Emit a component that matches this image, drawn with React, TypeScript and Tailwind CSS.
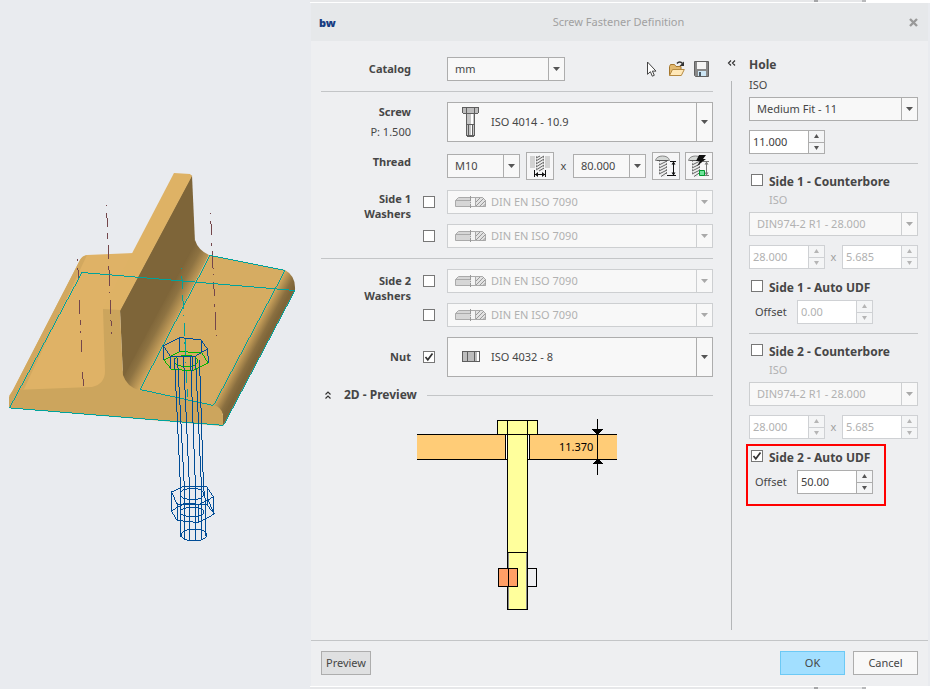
import { useState, type ReactNode } from 'react'
import clsx from 'clsx'

interface DropdownProps {
  label: string
  id?: string
  options: string[]
  disabled?: boolean
  icon?: ReactNode
  className?: string
  selectClass?: string
}

function Dropdown({ label, id, options, disabled, icon, className = 'h-6', selectClass = 'pl-[7px]' }: DropdownProps) {
  return (
    <div
      className={clsx(
        'grid grid-cols-[1fr_16px] border bg-[#f8f8f8]',
        disabled ? 'border-[#cdcfd1] text-[#b1b1b1]' : 'border-[#adadad] text-[#464646]',
        className
      )}
    >
      <select
        id={id}
        aria-label={label}
        disabled={disabled}
        className={clsx('col-span-2 col-start-1 row-start-1 h-full w-full appearance-none outline-none', selectClass)}
      >
        {options.map((option) => (
          <option key={option}>{option}</option>
        ))}
      </select>
      {icon && <span className="pointer-events-none col-start-1 row-start-1 flex items-center pl-[7px]">{icon}</span>}
      <span
        className={clsx(
          'pointer-events-none col-start-2 row-start-1 flex items-center justify-center border-l',
          disabled ? 'border-[#cdcfd1]' : 'border-[#adadad]'
        )}
      >
        <svg width="7" height="4" viewBox="0 0 7 4" aria-hidden="true">
          <path d="M0 0h7L3.500 4z" fill={disabled ? '#a9a9a9' : '#555'} />
        </svg>
      </span>
    </div>
  )
}

interface SpinnerProps {
  label: string
  id?: string
  initial: string
  digits: number
  disabled?: boolean
}

function Spinner({ label, id, initial, digits, disabled }: SpinnerProps) {
  const [value, setValue] = useState(initial)
  const step = (delta: number) => setValue((Number(value) + delta).toFixed(digits))
  const border = disabled ? 'border-[#cfd1d4]' : 'border-[#adadad]'
  const fill = disabled ? '#b5b5b5' : '#555'

  return (
    <div className={clsx('flex h-6 w-[76px] border bg-white', border)}>
      <input
        id={id}
        type="text"
        aria-label={label}
        value={value}
        disabled={disabled}
        onChange={(e) => setValue(e.target.value)}
        className={clsx('w-0 flex-1 pl-[3px] outline-none', disabled ? 'text-[#b1b1b1]' : 'text-[#404040]')}
      />
      <div className={clsx('flex w-4 flex-col border-l bg-[#f4f5f6]', border)}>
        <button
          type="button"
          aria-label={`Increase ${label}`}
          disabled={disabled}
          onClick={() => step(1)}
          className={clsx('flex flex-1 items-center justify-center border-b', border)}
        >
          <svg width="5" height="4" viewBox="0 0 5 4"><path d="M0 4h5L2.500 0z" fill={fill} /></svg>
        </button>
        <button
          type="button"
          aria-label={`Decrease ${label}`}
          disabled={disabled}
          onClick={() => step(-1)}
          className="flex flex-1 items-center justify-center"
        >
          <svg width="5" height="4" viewBox="0 0 5 4"><path d="M0 0h5L2.500 4z" fill={fill} /></svg>
        </button>
      </div>
    </div>
  )
}

function Checkbox({ id, label, initial = false }: { id?: string; label: string; initial?: boolean }) {
  const [checked, setChecked] = useState(initial)
  return (
    <span className="grid size-3 shrink-0">
      <input
        id={id}
        type="checkbox"
        aria-label={label}
        checked={checked}
        onChange={(e) => setChecked(e.target.checked)}
        className="col-start-1 row-start-1 size-3 appearance-none border border-[#777] bg-white"
      />
      {checked && (
        <svg viewBox="0 0 12 12" className="pointer-events-none col-start-1 row-start-1 size-3" aria-hidden="true">
          <path d="M2.500 6l2.300 2.800L9.500 2.500" fill="none" stroke="#333" strokeWidth="1.700" />
        </svg>
      )}
    </span>
  )
}

function BoltIcon() {
  return (
    <svg width="32" height="32" viewBox="0 0 32 32" shapeRendering="crispEdges">
      <path d="M7.500 1.500h16v5l-1 1h-14l-1-1z" fill="#bdbdbd" stroke="#5e5e5e" />
      <path d="M11.500 1.500v6M19.500 1.500v6" stroke="#5e5e5e" />
      <path d="M11.500 7.500h8v22h-8z" fill="#c4c4c4" stroke="#5e5e5e" />
      <path d="M16 8h2v21h-2z" fill="#fff" />
      <path d="M11 18.500h9M13.500 19v10M17.500 19v10" stroke="#5e5e5e" />
      <path d="M12 29.500h7" stroke="#5e5e5e" strokeWidth="2" />
    </svg>
  )
}

function NutIcon() {
  return (
    <svg width="32" height="32" viewBox="0 0 32 32" shapeRendering="crispEdges">
      <path d="M7 10h18v11H7z" fill="#5e5e5e" />
      <path d="M8 11h4v9H8zM13 11h6v9h-6zM20 11h2v9h-2z" fill="#bdbdbd" />
      <path d="M22 11h2v9h-2z" fill="#fff" />
    </svg>
  )
}

function WasherIcon() {
  return (
    <svg width="32" height="12" viewBox="0 0 32 12">
      <path d="M.500 10.500v-6l3-3h24l3 3v6z" fill="#d6d6d6" stroke="#aaa" />
      <path d="M16 2h4v8h-4z" fill="#f4f4f4" />
      <path d="M20.500 1.500h7l3 3v6h-10z" fill="#e2e2e2" stroke="#aaa" />
      <path d="M21 6l4-4M21 10l8-8M24.500 10.500l6-6M28 10.500l2.500-2.500" stroke="#999" />
      <path d="M.500 4.500h15" stroke="#aaa" />
      <path d="M15.500 0v12" stroke="#999" strokeDasharray="5 1 1 1" />
    </svg>
  )
}

function DiameterIcon() {
  return (
    <svg width="22" height="22" viewBox="0 0 22 22">
      <path d="M1 1h5v12H1zM16 1h5v12h-5z" fill="#d2d2d2" />
      <path d="M7 1h8v13l-1 2H8l-1-2z" fill="#ececec" />
      <path d="M7.500 1v13M14.500 1v13" stroke="#999" strokeDasharray="2 1" />
      <path d="M7 3l4-2M7 6l8-5M7 9l8-5M7 12l8-5M7 15l8-5M10 16l5-3" stroke="#666" />
      <path d="M5.500 15v7M16.500 15v7M6 19.500h10" stroke="#111" fill="none" />
      <path d="M6 19.500l3-2.500v5zM16 19.500l-3-2.500v5z" fill="#111" />
    </svg>
  )
}

function LengthIcon({ auto = false }: { auto?: boolean }) {
  return (
    <svg width="24" height="24" viewBox="0 0 24 24">
      <path d="M5 6h8v14l-2.500 3h-3L5 20z" fill="#ececec" />
      <path d="M5.500 6v14M12.500 6v14" stroke="#999" strokeDasharray="2 1" />
      <path d="M5 11l8-4M5 14l8-4M5 17l8-4M5 20l8-4M7 22.500l6-4" stroke="#666" />
      <path d="M1.500 6.500C2 3.500 5 2 8.500 2S15 3.500 15.500 6.500z" fill="#d5d8d6" stroke="#888" />
      <path d="M3 6.500h11" stroke="#555" />
      <path d="M16 7.500h6M13 21.500h9M19.500 8v13" stroke={auto ? '#777' : '#111'} fill="none" />
      <path d="M19.500 7.500l-2 3h4zM19.500 21.500l-2-3h4z" fill={auto ? '#777' : '#111'} />
      {auto && (
        <>
          <path d="M12 1h7l-3 4h3l-9 7 3-5H9z" fill="#111" />
          <path d="M12.500 16.500h5v5h-5z" fill="#6fe39a" stroke="#009a2e" />
        </>
      )}
    </svg>
  )
}

function CursorIcon() {
  return (
    <svg width="18" height="18" viewBox="0 0 18 18">
      <path d="M4.500 2v12.300l2.900-2.600 1.900 4.500 2-.9-1.900-4.200h3.600z" fill="#fdfdfd" stroke="#444" />
    </svg>
  )
}

function FolderIcon() {
  return (
    <svg width="18" height="18" viewBox="0 0 18 18">
      <path d="M1.500 15.500v-9l1-2h4l1.500 2h5v4" fill="#e2b96f" stroke="#a6772d" />
      <path d="M1.500 15.500l3-6h11.800l-3 6z" fill="#ffe8b8" stroke="#b58a42" />
      <path d="M9 3.500c1.500-2 4-2 5.500 0" fill="none" stroke="#333" strokeWidth="1.500" />
      <path d="M16 1.500v4.500h-4.500z" fill="#333" />
    </svg>
  )
}

function SaveIcon() {
  return (
    <svg width="18" height="18" viewBox="0 0 18 18">
      <path d="M1.500 1.500h14v15h-13l-1-1z" fill="#888" stroke="#606060" />
      <path d="M4 2h9v7H4z" fill="#f5f5f5" />
      <path d="M5 11h8v5H5z" fill="#cde6f5" />
      <path d="M6 12h2v4H6z" fill="#4b5a66" />
    </svg>
  )
}

// Beam with a flange, its bounding curves and the wireframe of the fastener
function ModelView() {
  return (
    <svg viewBox="0 160 310 400" className="h-auto w-full" role="img" aria-label="3D model">
      <defs>
        <linearGradient id="fillet" gradientUnits="userSpaceOnUse" x1="155" y1="316" x2="175" y2="327">
          <stop offset="0" stopColor="#7e6539" />
          <stop offset="0.350" stopColor="#8e7342" />
          <stop offset="1" stopColor="#d6ac62" />
        </linearGradient>
        <linearGradient id="edge" gradientUnits="userSpaceOnUse" x1="249" y1="338" x2="262" y2="345">
          <stop offset="0" stopColor="#d3a95f" />
          <stop offset="0.700" stopColor="#8a6f40" />
          <stop offset="1" stopColor="#7e6539" />
        </linearGradient>
      </defs>
      <path d="M9 396L13 390L80 260Q82 256 87 255L134 253L118 320L105 388L20 395Z" fill="#dfb266" />
      <path d="M9 397L13 390L80 260Q82 256 87 255L24 389Z" fill="#d2a85f" />
      <path d="M195 240Q198 250 209 255L140 391Q121 391 122 372Z" fill="url(#fillet)" />
      <path d="M209 255L285 270L213 407L139 391Z" fill="#d6ac62" />
      <path d="M285 270Q296 276 295 290L223 426V414Q218 412 211 406Z" fill="url(#edge)" />
      <path d="M192 175L195 242L123 378L120 310Z" fill="#7e6539" />
      <path d="M174 173L190 174L192 176L120 311L103 309Z" fill="#deb265" />
      <path
        d="M9 408V397L14 390L92 387Q105 384 105 371L103 309L120 310L123 375Q127 387 139 390L213 405Q222 407 223 415V426Z"
        fill="#cca55d"
      />
      <g fill="none" stroke="#74464b" shapeRendering="crispEdges">
        <path d="M106.500 205L111.500 334" strokeDasharray="1 7 14 6 6 6 14 7 20 6" />
        <path d="M210.500 213L216.500 343" strokeDasharray="1 7 14 8 3 5 18 5" />
        <path d="M77.500 259L83.500 390" strokeDasharray="2 7 12 20 14 6 5 6" />
      </g>
      <g fill="none" stroke="#00a39c" shapeRendering="crispEdges">
        <path d="M9.500 408L82 272.500L295 290.500L223.500 425.500Z" />
        <path d="M210 255.500L285 270.500L213.500 405.500L140 389.500Z" />
        <path d="M181.500 268L187.500 397" strokeDasharray="1 7 13 6 14 6" />
      </g>
      <g fill="none" stroke="#00b800" shapeRendering="crispEdges">
        <path d="M164 360L180 351.500L202 353L208 363L192 371L171 369Z" />
        <ellipse cx="186" cy="361" rx="12" ry="6" />
      </g>
      <g fill="none" stroke="#004c96" shapeRendering="crispEdges">
        <path d="M163.500 346L180 337.500L201 340L207.500 349L194 357L170 356Z" />
        <path d="M163.500 346V360M180 338V352M201.500 340V353M207.500 349L208.500 363M193 357V371M170 356L171 369" />
        <path d="M174.500 358L180.500 487V537M177.500 358L184.500 490V540M183.500 357L189.500 488V541M190.500 357L195.500 488V541M195.500 358L201.500 488V540M199.500 360L203.500 488L206 505V536" />
        <path d="M171.500 492L184 486L207 487L213.500 497L198 505L177 504Z" />
        <path d="M171.500 511L185 503L207 505L214.500 514L198 522.500L177 520.500Z" />
        <path d="M171.500 492V511M184.500 486V503M207.500 487V505M213.500 497V514M198.500 505V522M177.500 504V520M171.500 492L177 504M214 514L207 497" />
        <ellipse cx="192" cy="494" rx="12" ry="6" />
        <ellipse cx="192" cy="512" rx="12" ry="5" />
        <ellipse cx="194" cy="535" rx="13" ry="6" />
      </g>
      <path d="M185.500 339V352" stroke="#00a39c" shapeRendering="crispEdges" />
    </svg>
  )
}

function SectionDrawing() {
  return (
    <svg width="200" height="192" viewBox="0 0 200 192" shapeRendering="crispEdges" role="img" aria-label="Cross section">
      <path d="M0 15h200v25H0z" fill="#ffcc77" />
      <path d="M88 16h24v24H88z" fill="#fff" />
      <path d="M0 15.500h200M0 40.500h200M88.500 15v26M112.500 15v26" stroke="#000" />
      <path d="M80.500 1.500h40v14h-40z" fill="#ffff9c" stroke="#000" />
      <path d="M90.500 1.500h20v189h-20z" fill="#ffff9c" stroke="#000" />
      <path d="M90 15.500h21M90 133.500h21" stroke="#000" />
      <path d="M91.500 134v56M109.500 134v56" stroke="#888" />
      <path d="M110.500 149.500h9v18h-9z" fill="#eeeff1" stroke="#000" />
      <path d="M81.500 149.500h19v18h-19z" fill="#ff9f66" stroke="#000" />
      <path d="M91.500 149v19M180.500 0v56" stroke="#000" />
      <path d="M175 10h11l-5 6h-1zM180 40h1l5 5h-11z" fill="#000" />
      <text x="142" y="32" fontSize="11" fill="#000" fontFamily="'Noto Sans', sans-serif">11.370</text>
    </svg>
  )
}

function Washers({ side, labelClass }: { side: number; labelClass: string }) {
  return (
    <>
      {[1, 2].map((n) => (
        <div key={n} className="contents">
          {n === 1 && (
            <span className={clsx('row-span-2 self-start text-right leading-[15px] font-bold', labelClass)}>
              Side {side}<br />Washers
            </span>
          )}
          <Checkbox label={`Side ${side} washer ${n}`} />
          <Dropdown
            label={`Side ${side} washer ${n} type`}
            options={['DIN EN ISO 7090']}
            icon={<WasherIcon />}
            selectClass="pl-[43px]"
            disabled
          />
        </div>
      ))}
    </>
  )
}

function HoleSide({ side, udf, offset }: { side: number; udf: boolean; offset: string }) {
  return (
    <section className="border-t border-[#c3c5c7] pt-2">
      <div className="flex h-5 gap-1.5 pl-0.5">
        <span className="pt-0.5"><Checkbox id={`cb${side}`} label={`Side ${side} - Counterbore`} /></span>
        <label htmlFor={`cb${side}`} className="text-xs leading-5 font-bold">Side {side} - Counterbore</label>
      </div>
      <p className="pl-5 leading-4 text-[#b1b1b1]">ISO</p>
      <Dropdown label={`Side ${side} counterbore`} options={['DIN974-2 R1 - 28.000']} className="mt-1 h-6" disabled />
      <div className="mt-[9px] flex items-center justify-between text-[#a0a0a0]">
        <Spinner label={`side ${side} diameter`} initial="28.000" digits={3} disabled />
        <span>x</span>
        <Spinner label={`side ${side} depth`} initial="5.685" digits={3} disabled />
      </div>
      <div className="relative mt-[9px] mb-[9px]">
        {udf && <div className="pointer-events-none absolute -top-1 -left-[3px] h-[62px] w-[140px] border-2 border-[#ff0000]" />}
        <div className="flex h-5 gap-1.5 pl-0.5">
          <span className="pt-0.5"><Checkbox id={`udf${side}`} label={`Side ${side} - Auto UDF`} initial={udf} /></span>
          <label htmlFor={`udf${side}`} className="text-xs leading-5 font-bold">Side {side} - Auto UDF</label>
        </div>
        <div className="mt-0.5 flex items-center pl-1.5">
          <label htmlFor={`offset${side}`} className="w-[42px]">Offset</label>
          <Spinner id={`offset${side}`} label={`side ${side} offset`} initial={offset} digits={2} disabled={!udf} />
        </div>
      </div>
    </section>
  )
}

function WindowEdge() {
  return (
    <div className="flex h-[3px] bg-white">
      <div className="h-0.5 flex-1 bg-[#e6e7e9]" />
      <div className="h-0.5 w-1 bg-[#a5a6a8]" />
      <div className="h-0.5 w-11 bg-[#e6e7e9]" />
      <div className="h-0.5 w-1 bg-[#b8b9bb]" />
      <div className="w-16" />
    </div>
  )
}

const iconButton = 'flex size-7 items-center justify-center border border-[#adadad] bg-[#f6f6f7]'

export default function App() {
  return (
    <div className="flex min-h-screen bg-[#e9ebef] font-['Noto_Sans',sans-serif] text-[11px] text-[#464646]">
      <div className="w-1/3 pt-40">
        <ModelView />
      </div>

      <div className="flex flex-1 flex-col">
        <WindowEdge />
        <div className="mr-0.5 ml-px flex flex-1 flex-col bg-[#eeeff1]">
          <header className="flex h-[38px] items-center bg-[#e6e8ea] pr-2.5 pl-2">
            <span className="w-6 pt-0.5 font-black text-[#173c82]">bw</span>
            <h1 className="flex-1 text-center text-[#a1a1a1]">Screw Fastener Definition</h1>
            <button type="button" aria-label="Close" className="flex w-6 justify-end">
              <svg width="9" height="9" viewBox="0 0 9 9"><path d="M1 1l7 7M8 1L1 8" stroke="#999" strokeWidth="2.400" /></svg>
            </button>
          </header>

          <main className="flex flex-1 pr-2.5 pl-2.5">
            <div className="flex-1 pt-4">
              <div className="grid grid-cols-[90px_12px_1fr] items-center gap-x-3 gap-y-2.5">
                <label htmlFor="catalog" className="text-right font-bold">Catalog</label>
                <div className="col-start-3 flex items-center">
                  <Dropdown id="catalog" label="Catalog" options={['mm', 'inch']} className="h-6 w-[118px]" />
                  <div className="ml-auto flex gap-[7px] pr-0.5">
                    <button type="button" aria-label="Select"><CursorIcon /></button>
                    <button type="button" aria-label="Open"><FolderIcon /></button>
                    <button type="button" aria-label="Save"><SaveIcon /></button>
                  </div>
                </div>

                <hr className="col-span-3 border-[#c3c5c7]" />

                <label htmlFor="screw" className="self-start text-right leading-5">
                  <b>Screw</b><br />P: 1.500
                </label>
                <Dropdown
                  id="screw"
                  label="Screw"
                  options={['ISO 4014 - 10.9']}
                  icon={<BoltIcon />}
                  className="col-start-3 h-10"
                  selectClass="pl-[43px]"
                />

                <label htmlFor="thread" className="self-start text-right leading-5 font-bold">Thread</label>
                <div className="col-start-3 flex items-center">
                  <Dropdown id="thread" label="Thread" options={['M10', 'M12']} className="h-6 w-[73px]" />
                  <button type="button" aria-label="Measure diameter" className={clsx(iconButton, 'ml-1.5')}><DiameterIcon /></button>
                  <span className="flex-1 text-center">x</span>
                  <Dropdown label="Length" options={['80.000', '90.000']} className="h-6 w-[73px]" />
                  <button type="button" aria-label="Measure length" className={clsx(iconButton, 'mr-[5px] ml-1.5')}><LengthIcon /></button>
                  <button type="button" aria-label="Automatic length" className={iconButton}><LengthIcon auto /></button>
                </div>

                <Washers side={1} labelClass="pt-px" />
                <hr className="col-span-3 border-[#c3c5c7]" />
                <Washers side={2} labelClass="pt-1" />

                <label htmlFor="nut" className="text-right font-bold">Nut</label>
                <Checkbox id="nut" label="Nut" initial />
                <Dropdown label="Nut type" options={['ISO 4032 - 8']} icon={<NutIcon />} className="h-10" selectClass="pl-[43px]" />
              </div>

              <div className="mt-2.5 flex items-center pl-1">
                <button type="button" aria-label="Collapse preview" className="w-[19px]">
                  <svg width="6" height="8" viewBox="0 0 6 8">
                    <path d="M.500 3.500L3 1l2.500 2.500M.500 7.500L3 5l2.500 2.500" fill="none" stroke="#333" strokeWidth="1.200" />
                  </svg>
                </button>
                <h2 className="pr-2.5 text-xs font-bold">2D - Preview</h2>
                <hr className="flex-1 border-[#c3c5c7]" />
              </div>
              <div className="flex justify-center pt-4 pb-4">
                <SectionDrawing />
              </div>
            </div>

            <div className="flex w-9 flex-col items-center pt-4 pb-2.5">
              <button type="button" aria-label="Collapse hole panel" className="mb-3 flex h-3 items-center">
                <svg width="9" height="6" viewBox="0 0 9 6">
                  <path d="M4 .500L1.500 3L4 5.500M8 .500L5.500 3L8 5.500" fill="none" stroke="#333" strokeWidth="1.200" />
                </svg>
              </button>
              <div className="w-px flex-1 bg-[#b4b6b8]" />
            </div>

            <aside className="w-[169px] pt-3.5">
              <h2 className="text-xs leading-5 font-bold">Hole</h2>
              <p className="leading-5">ISO</p>
              <Dropdown label="Hole fit" options={['Medium Fit - 11']} className="mt-0.5 h-6" />
              <div className="mt-[9px] mb-[9px]">
                <Spinner label="hole diameter" initial="11.000" digits={3} />
              </div>
              <HoleSide side={1} udf={false} offset="0.00" />
              <HoleSide side={2} udf offset="50.00" />
            </aside>
          </main>

          <footer className="flex gap-2 border-t border-[#c3c5c7] px-2.5 pt-2.5 pb-[11px]">
            <button type="button" className="h-6 border border-[#adadad] bg-[#dfe0e1] px-1">Preview</button>
            <button type="button" className="ml-auto h-6 w-[65px] border border-[#6cc9f5] bg-[#a2dfff]">OK</button>
            <button type="button" className="h-6 w-[65px] border border-[#adadad] bg-[#f8f8f8]">Cancel</button>
          </footer>
        </div>
        <div className="rotate-x-180">
          <WindowEdge />
        </div>
      </div>
    </div>
  )
}
